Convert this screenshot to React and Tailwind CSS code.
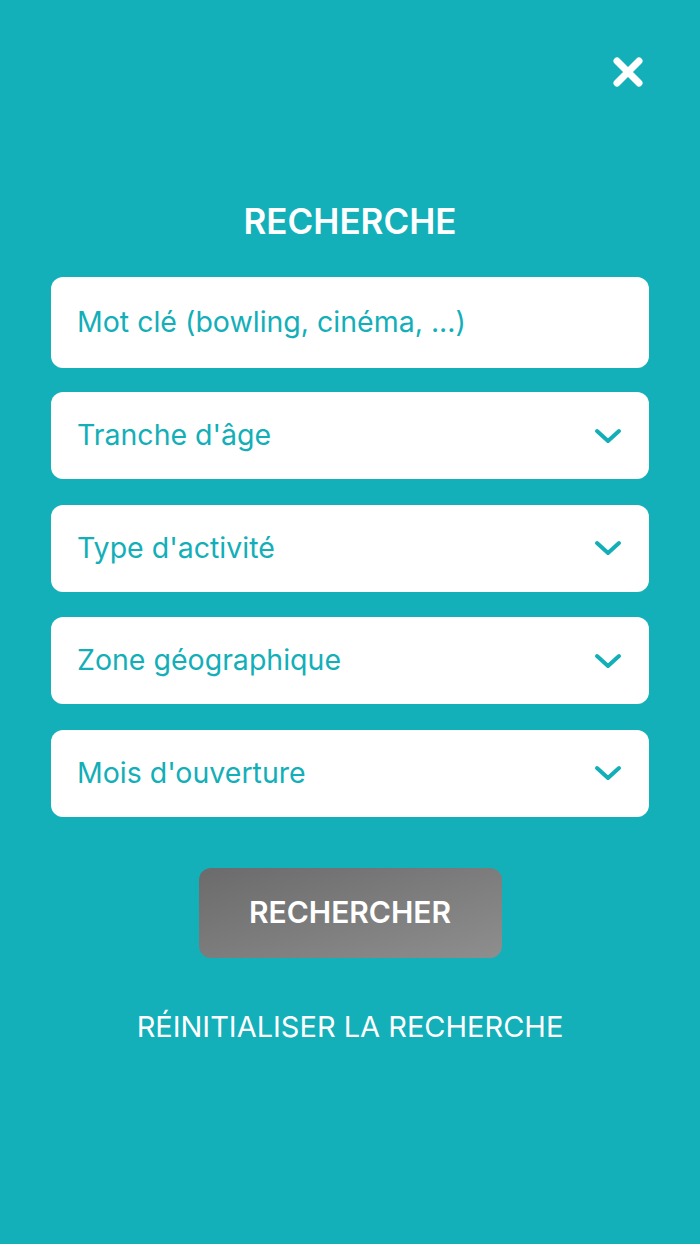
import React from "react";

function Chevron() {
  return (
    <svg width="28" height="18" viewBox="0 0 28 18" fill="none" className="shrink-0">
      <path d="M3 4 L14 14 L25 4" stroke="#13afb8" strokeWidth="4" strokeLinecap="round" strokeLinejoin="round" />
    </svg>
  );
}

function Field({ label, select, tall }) {
  return (
    <div
      className={`flex items-center justify-between rounded-[12px] bg-white pl-[26px] pr-[27px] ${tall ? "h-[91px]" : "h-[87px]"}`}
    >
      <span className="text-[28.5px] leading-none text-[#13afb8]">{label}</span>
      {select && <Chevron />}
    </div>
  );
}

export default function App() {
  return (
    <div
      className="min-h-[1244px] w-full bg-[#13b0b9] flex flex-col"
      style={{ fontFamily: "Inter, Roboto, 'Noto Sans', sans-serif" }}
    >
      <div className="flex justify-end pt-[56px] pr-[56px]">
        <svg width="32" height="32" viewBox="0 0 32 32">
          <path d="M5 5 L27 27 M27 5 L5 27" stroke="white" strokeWidth="7" strokeLinecap="round" />
        </svg>
      </div>
      <h1 className="mt-[113px] text-center text-[35px] leading-[40px] font-semibold text-white">
        RECHERCHE
      </h1>
      <div className="mt-[36px] px-[51px] flex flex-col">
        <Field label="Mot clé (bowling, cinéma, ...)" tall />
        <div className="mt-[24px] flex flex-col gap-[25.5px]">
          <Field label="Tranche d'âge" select />
          <Field label="Type d'activité" select />
          <Field label="Zone géographique" select />
          <Field label="Mois d'ouverture" select />
        </div>
      </div>
      <div className="mt-[51px] flex justify-center">
        <button className="h-[90px] w-[303px] rounded-[12px] bg-gradient-to-br from-[#6b6b6b] to-[#8e8e8e] text-white text-[30px] font-semibold">
          RECHERCHER
        </button>
      </div>
      <div className="mt-[52px] text-center text-white text-[29px] leading-[34px]">
        RÉINITIALISER LA RECHERCHE
      </div>
    </div>
  );
}
